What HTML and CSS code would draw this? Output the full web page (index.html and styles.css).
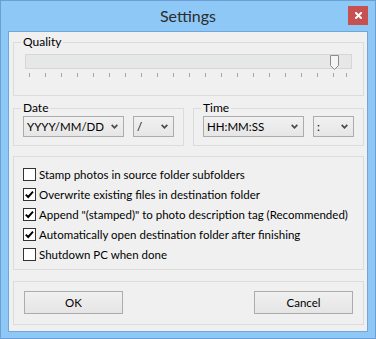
FILE: index.html
```html
<!DOCTYPE HTML>
<html>
<head>
    <title>Settings</title>
    <meta charset="utf-8" />
    <link rel="stylesheet" href="styles.css">
</head>
<body>
    <div id="window">
        <div class="titlebar">
            <span></span>
            <h1 class="title">Settings</h1>
            <button class="close" type="button" aria-label="Close">
                <svg width="7" height="7" viewBox="0 0 7 7"><path d="M1 1 L6 6 M6 1 L1 6" stroke="#fff" stroke-width="2" stroke-linecap="square" fill="none"/></svg>
            </button>
        </div>

        <div class="client">

            <fieldset class="group quality">
                <legend>Quality</legend>
                <div class="slider">
                    <div class="track"></div>
                    <svg class="thumb" width="9" height="15" viewBox="0 0 9 15">
                        <path d="M0.5 0.5 H8.5 V10.5 L4.5 14.5 L0.5 10.5 Z" fill="#f4f4f4" stroke="#8c8c8c"/>
                    </svg>
                </div>
                <div class="ticks">
                    <span></span><span></span><span></span><span></span><span></span>
                    <span></span><span></span><span></span><span></span><span></span>
                    <span></span><span></span><span></span><span></span><span></span>
                    <span></span><span></span><span></span><span></span><span></span>
                    <span></span>
                </div>
            </fieldset>

            <div class="format-row">
                <fieldset class="group format">
                    <legend>Date</legend>
                    <div class="combos">
                        <div class="combo wide">
                            <span>YYYY/MM/DD</span>
                            <svg width="7" height="5" viewBox="0 0 7 5"><path d="M0.7 0.8 L3.5 3.8 L6.3 0.8" stroke="#4a4a4a" stroke-width="1.7" fill="none"/></svg>
                        </div>
                        <div class="combo narrow">
                            <span>/</span>
                            <svg width="7" height="5" viewBox="0 0 7 5"><path d="M0.7 0.8 L3.5 3.8 L6.3 0.8" stroke="#4a4a4a" stroke-width="1.7" fill="none"/></svg>
                        </div>
                    </div>
                </fieldset>
                <fieldset class="group format">
                    <legend>Time</legend>
                    <div class="combos">
                        <div class="combo wide">
                            <span>HH:MM:SS</span>
                            <svg width="7" height="5" viewBox="0 0 7 5"><path d="M0.7 0.8 L3.5 3.8 L6.3 0.8" stroke="#4a4a4a" stroke-width="1.7" fill="none"/></svg>
                        </div>
                        <div class="combo narrow">
                            <span>:</span>
                            <svg width="7" height="5" viewBox="0 0 7 5"><path d="M0.7 0.8 L3.5 3.8 L6.3 0.8" stroke="#4a4a4a" stroke-width="1.7" fill="none"/></svg>
                        </div>
                    </div>
                </fieldset>
            </div>

            <fieldset class="group options">
                <label class="check"><span class="box"></span>Stamp photos in source folder subfolders</label>
                <label class="check"><span class="box checked"></span>Overwrite existing files in destination folder</label>
                <label class="check"><span class="box checked"></span>Append "(stamped)" to photo description tag (Recommended)</label>
                <label class="check"><span class="box checked"></span>Automatically open destination folder after finishing</label>
                <label class="check"><span class="box"></span>Shutdown PC when done</label>
            </fieldset>

            <fieldset class="group actions">
                <button class="btn" type="button">OK</button>
                <button class="btn" type="button">Cancel</button>
            </fieldset>

        </div>
    </div>
</body>
</html>
```

FILE: styles.css
```css
/* Base */
html, body { margin: 0; padding: 0; }
body {
    background: #ffffff;
    color: #000000;
    font-family: Lato, "Liberation Sans", sans-serif;
    font-size: 11.5px;
}

/* Window frame */
#window {
    width: 376px;
    height: 339px;
    box-sizing: border-box;
    border: 1px solid #6c9fd4;
    background: #8ec8f6;
}

.titlebar {
    height: 30px;
    display: grid;
    grid-template-columns: 1fr auto 1fr;
}

.title {
    margin: 0;
    font-size: 16px;
    font-weight: normal;
    line-height: 30px;
    color: #2d2d2d;
}

.close {
    justify-self: end;
    align-self: start;
    margin: 5px 7px 0 0;
    width: 20px;
    height: 19px;
    padding: 0;
    border: 0;
    background: #c75050;
    display: flex;
    align-items: center;
    justify-content: center;
}

.client {
    margin: 0 7px;
    height: 301px;
    box-sizing: border-box;
    border: 1px solid #70a6dc;
    background: #f0f0f0;
    padding: 3px 3px 5px 4px;
}

/* Group boxes */
.group {
    margin: 0;
    min-width: 0;
    border: 1px solid #dcdcdc;
    padding: 0 11px;
}
.group legend {
    padding: 0 2px;
    margin-left: -4px;
    line-height: 14px;
    font-size: 12px;
}

/* Quality slider */
.quality { padding-bottom: 18px; }

.slider {
    position: relative;
    margin-top: 5px;
    height: 15px;
}
.track {
    height: 15px;
    box-sizing: border-box;
    border: 1px solid #d6d6d6;
    background: #e6e8e8;
}
.thumb {
    position: absolute;
    left: 305px;
    top: 1px;
}

.ticks {
    display: flex;
    gap: 15px;
    margin: 4px 0 0 4px;
    height: 4px;
}
.ticks span {
    width: 1px;
    background: #a6a6a6;
}
.ticks span:last-child { margin-left: -3px; }

/* Date and time */
.format-row {
    display: grid;
    grid-template-columns: 1fr 1fr;
    gap: 9px;
    margin-top: 5px;
}
.format {
    padding: 0 9px 8px;
}
.format legend { margin-left: -2px; }

.combos {
    display: flex;
    gap: 9px;
    margin-top: 1px;
}
.combo {
    height: 21px;
    box-sizing: border-box;
    border: 1px solid #acacac;
    background: linear-gradient(#f1f1f1, #e6e6e6);
    display: flex;
    align-items: center;
    justify-content: space-between;
    padding: 0 5px 0 3px;
}
.combo svg { flex-shrink: 0; }
.combo.wide { width: 101px; }
.combo.narrow { width: 41px; }

/* Options */
.options {
    margin-top: 10px;
    padding: 7px 9px 5px;
}
.check {
    display: flex;
    align-items: center;
    gap: 3px;
    height: 20px;
    white-space: nowrap;
}
.box {
    flex-shrink: 0;
    width: 13px;
    height: 13px;
    box-sizing: border-box;
    border: 1px solid #333333;
    background: #ffffff;
}
.box.checked {
    background: #ffffff url("data:image/svg+xml,%3Csvg xmlns='http://www.w3.org/2000/svg' width='11' height='11' viewBox='0 0 11 11'%3E%3Cpath d='M1.8 5.6 L4.2 8 L9 2.6' stroke='%23000' stroke-width='1.9' fill='none'/%3E%3C/svg%3E") center / 11px 11px no-repeat;
}

/* Buttons */
.actions {
    margin-top: 11px;
    padding: 9px 10px 10px;
    display: flex;
    justify-content: space-between;
}
.btn {
    width: 99px;
    height: 23px;
    padding: 0;
    border: 1px solid #acacac;
    background: linear-gradient(#f0f0f0, #e5e5e5);
    font: inherit;
    color: #000000;
}
```
